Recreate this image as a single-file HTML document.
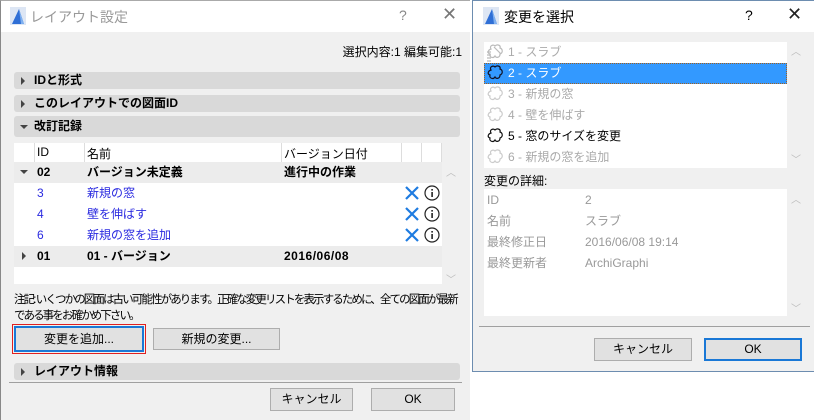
<!DOCTYPE html>
<html><head><meta charset="utf-8"><style>
*{box-sizing:border-box;margin:0;padding:0}
body{width:814px;height:420px;background:#fff;position:relative;overflow:hidden;font-family:"Liberation Sans","Noto Sans CJK JP",sans-serif;font-size:12px;color:#000}
.a{position:absolute;white-space:nowrap}
.dlg{position:absolute;background:#f0f0f0}
.tb{position:absolute;left:0;right:0;top:0;height:31px;background:#fff}
.bar{position:absolute;left:13px;width:446px;background:#d9d9d9;border-radius:3px;font-weight:bold;font-size:12px;line-height:17px}
.tri{position:absolute;left:7px;top:5px;width:0;height:0;border-left:4px solid #444;border-top:4px solid transparent;border-bottom:4px solid transparent}
.trid{position:absolute;left:6px;top:7px;width:0;height:0;border-top:4px solid #444;border-left:4px solid transparent;border-right:4px solid transparent}
.btn{position:absolute;background:#e1e1e1;border:1px solid #adadad;text-align:center;font-size:12px}
.blue{color:#2a2ae0}
.row{position:absolute;height:21px;line-height:21px;font-size:12px}
</style></head><body>

<!-- LEFT DIALOG -->
<div class="dlg" style="left:0;top:0;width:470px;height:420px;border-left:1px solid #888;border-top:1px solid #aaa">
 <div class="tb"></div>
 <svg class="a" style="left:9px;top:6px" width="16" height="18"><rect x="0" y="0" width="16" height="18" fill="#dde6f4"/><path d="M2 17 L9 2 L14 17 Z" fill="#2f6fd6"/><path d="M9 2 L14 17 L11 17 Z" fill="#7fb0f0"/></svg>
 <div class="a" style="left:29px;top:6px;font-size:14px;color:#999">レイアウト設定</div>
 <div class="a" style="left:398px;top:6px;font-size:14px;color:#888">?</div>
 <div class="a" style="left:441px;top:3px;font-size:18px;color:#777">✕</div>
 <div class="a" style="right:8px;top:42px;font-size:12px">選択内容:1 編集可能:1</div>

 <div class="bar" style="top:71px;height:17px"><div class="tri"></div><span style="margin-left:20px">IDと形式</span></div>
 <div class="bar" style="top:94px;height:17px"><div class="tri"></div><span style="margin-left:20px">このレイアウトでの図面ID</span></div>
 <div class="bar" style="top:115px;height:21px;line-height:21px"><div class="trid" style="top:9px"></div><span style="margin-left:20px">改訂記録</span></div>

 <div class="a" style="left:13px;top:142px;width:428px;height:141px;background:#fff"></div>
 <div class="a" style="left:33px;top:142px;width:1px;height:19px;background:#ddd"></div>
 <div class="a" style="left:83px;top:142px;width:1px;height:19px;background:#ddd"></div>
 <div class="a" style="left:280px;top:142px;width:1px;height:19px;background:#ddd"></div>
 <div class="a" style="left:400px;top:142px;width:1px;height:19px;background:#ddd"></div>
 <div class="a" style="left:420px;top:142px;width:1px;height:19px;background:#ddd"></div>
 <div class="a" style="left:440px;top:142px;width:1px;height:19px;background:#ddd"></div>
 <div class="a" style="left:36px;top:144px">ID</div>
 <div class="a" style="left:86px;top:144px">名前</div>
 <div class="a" style="left:283px;top:144px">バージョン日付</div>

 <div class="a" style="left:13px;top:161px;width:428px;height:21px;background:#ececec"></div>
 <div class="trid" style="left:19px;top:169px;position:absolute"></div>
 <div class="row" style="left:36px;top:161px;font-weight:bold">02</div>
 <div class="row" style="left:86px;top:161px;font-weight:bold">バージョン未定義</div>
 <div class="row" style="left:283px;top:161px;font-weight:bold">進行中の作業</div>

 <div class="row blue" style="left:36px;top:182px">3</div>
 <div class="row blue" style="left:86px;top:182px">新規の窓</div>
 <div class="row blue" style="left:36px;top:203px">4</div>
 <div class="row blue" style="left:86px;top:203px">壁を伸ばす</div>
 <div class="row blue" style="left:36px;top:224px">6</div>
 <div class="row blue" style="left:86px;top:224px">新規の窓を追加</div>
 <svg class="a" style="left:403px;top:183px" width="38" height="63">
  <g stroke="#1e7be0" stroke-width="2.2"><path d="M2 3 L14 15 M14 3 L2 15"/><path d="M2 24 L14 36 M14 24 L2 36"/><path d="M2 45 L14 57 M14 45 L2 57"/></g>
  <g fill="none" stroke="#222" stroke-width="1.2"><circle cx="28" cy="9" r="7"/><circle cx="28" cy="30" r="7"/><circle cx="28" cy="51" r="7"/></g>
  <g fill="#222"><rect x="27.3" y="8" width="1.6" height="5"/><rect x="27.3" y="5" width="1.6" height="1.6"/><rect x="27.3" y="29" width="1.6" height="5"/><rect x="27.3" y="26" width="1.6" height="1.6"/><rect x="27.3" y="50" width="1.6" height="5"/><rect x="27.3" y="47" width="1.6" height="1.6"/></g>
 </svg>

 <div class="a" style="left:13px;top:245px;width:428px;height:21px;background:#ececec"></div>
 <div class="tri" style="left:21px;top:251px;position:absolute"></div>
 <div class="row" style="left:36px;top:245px;font-weight:bold">01</div>
 <div class="row" style="left:86px;top:245px;font-weight:bold">01 - バージョン</div>
 <div class="row" style="left:283px;top:245px;font-weight:bold;letter-spacing:0.5px">2016/06/08</div>
 <div class="a" style="left:445px;top:163px;font-size:10px;color:#bbb">︿</div>
 <div class="a" style="left:445px;top:270px;font-size:10px;color:#bbb">﹀</div>

 <div class="a" style="left:13px;top:291px;font-size:11.5px;line-height:16px;letter-spacing:-1.9px">注記: いくつかの図面は古い可能性があります。正確な変更リストを表示するために、全ての図面が最新<br>である事をお確かめ下さい。</div>

 <div class="a" style="left:11px;top:323px;width:134px;height:30px;border:1px solid #e02020"></div>
 <div class="btn" style="left:13px;top:325px;width:130px;height:26px;border:2px solid #1a78d6;line-height:22px">変更を追加...</div>
 <div class="btn" style="left:152px;top:327px;width:127px;height:22px;line-height:20px">新規の変更...</div>

 <div class="bar" style="top:362px;height:17px"><div class="tri"></div><span style="margin-left:20px">レイアウト情報</span></div>
 <div class="a" style="left:8px;top:381px;width:453px;height:1px;background:#a0a0a0"></div>
 <div class="btn" style="left:269px;top:387px;width:83px;height:23px;line-height:21px">キャンセル</div>
 <div class="btn" style="left:370px;top:387px;width:84px;height:23px;line-height:21px">OK</div>
</div>

<!-- RIGHT DIALOG -->
<div class="dlg" style="left:472px;top:0;width:342px;height:372px;border:1px solid #6d8db0;border-right:none">
 <div class="tb"></div>
 <svg class="a" style="left:10px;top:6px" width="16" height="18"><rect x="0" y="0" width="16" height="18" fill="#dde6f4"/><path d="M2 17 L9 2 L14 17 Z" fill="#2f6fd6"/><path d="M9 2 L14 17 L11 17 Z" fill="#7fb0f0"/></svg>
 <div class="a" style="left:31px;top:6px;font-size:14px">変更を選択</div>
 <div class="a" style="left:272px;top:6px;font-size:14px">?</div>
 <div class="a" style="left:314px;top:3px;font-size:18px;color:#222">✕</div>

 <div class="a" style="left:11px;top:41px;width:303px;height:126px;background:#fff"></div>
 <div class="a" style="left:11px;top:62px;width:303px;height:21px;background:#3399ff;border:1px dotted #a06020"></div>
 <svg class="a" style="left:13px;top:41px" width="22" height="126">
  <g fill="none" stroke-width="1.2">
   <path d="M5 7 C3 4 7 2 9 4 C11 2 15 3 14 6 C17 7 17 11 14 12 C14 16 10 16 9 14 C7 17 3 15 4 12 C1 11 2 8 5 7 Z" stroke="#bbb"/>
   <g stroke="#bbb"><path d="M1 13 H5 M1 16 H5 M1 19 H5 M1 10 H5"/><path d="M8 5 L15 12"/></g>
   <path transform="translate(0,21)" d="M5 7 C3 4 7 2 9 4 C11 2 15 3 14 6 C17 7 17 11 14 12 C14 16 10 16 9 14 C7 17 3 15 4 12 C1 11 2 8 5 7 Z" stroke="#112"/>
   <path transform="translate(0,42)" d="M5 7 C3 4 7 2 9 4 C11 2 15 3 14 6 C17 7 17 11 14 12 C14 16 10 16 9 14 C7 17 3 15 4 12 C1 11 2 8 5 7 Z" stroke="#ccc"/>
   <path transform="translate(0,63)" d="M5 7 C3 4 7 2 9 4 C11 2 15 3 14 6 C17 7 17 11 14 12 C14 16 10 16 9 14 C7 17 3 15 4 12 C1 11 2 8 5 7 Z" stroke="#ccc"/>
   <path transform="translate(0,84)" d="M5 7 C3 4 7 2 9 4 C11 2 15 3 14 6 C17 7 17 11 14 12 C14 16 10 16 9 14 C7 17 3 15 4 12 C1 11 2 8 5 7 Z" stroke="#111"/>
   <path transform="translate(0,105)" d="M5 7 C3 4 7 2 9 4 C11 2 15 3 14 6 C17 7 17 11 14 12 C14 16 10 16 9 14 C7 17 3 15 4 12 C1 11 2 8 5 7 Z" stroke="#ccc"/>
  </g>
 </svg>
 <div class="row" style="left:35px;top:41px;color:#aaa">1 - スラブ</div>
 <div class="row" style="left:35px;top:62px;color:#fff">2 - スラブ</div>
 <div class="row" style="left:35px;top:83px;color:#aaa">3 - 新規の窓</div>
 <div class="row" style="left:35px;top:104px;color:#aaa">4 - 壁を伸ばす</div>
 <div class="row" style="left:35px;top:125px;color:#000">5 - 窓のサイズを変更</div>
 <div class="row" style="left:35px;top:146px;color:#aaa">6 - 新規の窓を追加</div>
 <div class="a" style="left:318px;top:42px;font-size:10px;color:#bbb">︿</div>
 <div class="a" style="left:318px;top:150px;font-size:10px;color:#bbb">﹀</div>

 <div class="a" style="left:11px;top:171px;font-size:12px">変更の詳細:</div>
 <div class="a" style="left:11px;top:188px;width:303px;height:127px;background:#fff"></div>
 <div class="row" style="left:14px;top:189px;color:#999">ID</div>
 <div class="row" style="left:112px;top:189px;color:#999">2</div>
 <div class="row" style="left:14px;top:210px;color:#999">名前</div>
 <div class="row" style="left:112px;top:210px;color:#999">スラブ</div>
 <div class="row" style="left:14px;top:231px;color:#999">最終修正日</div>
 <div class="row" style="left:112px;top:231px;color:#999">2016/06/08 19:14</div>
 <div class="row" style="left:14px;top:252px;color:#999">最終更新者</div>
 <div class="row" style="left:112px;top:252px;color:#999">ArchiGraphi</div>
 <div class="a" style="left:318px;top:190px;font-size:10px;color:#bbb">︿</div>
 <div class="a" style="left:318px;top:299px;font-size:10px;color:#bbb">﹀</div>

 <div class="a" style="left:6px;top:325px;width:331px;height:1px;background:#a0a0a0"></div>
 <div class="btn" style="left:121px;top:337px;width:98px;height:23px;line-height:21px">キャンセル</div>
 <div class="btn" style="left:231px;top:337px;width:98px;height:23px;line-height:19px;border:2px solid #1a78d6">OK</div>
</div>
</body></html>
